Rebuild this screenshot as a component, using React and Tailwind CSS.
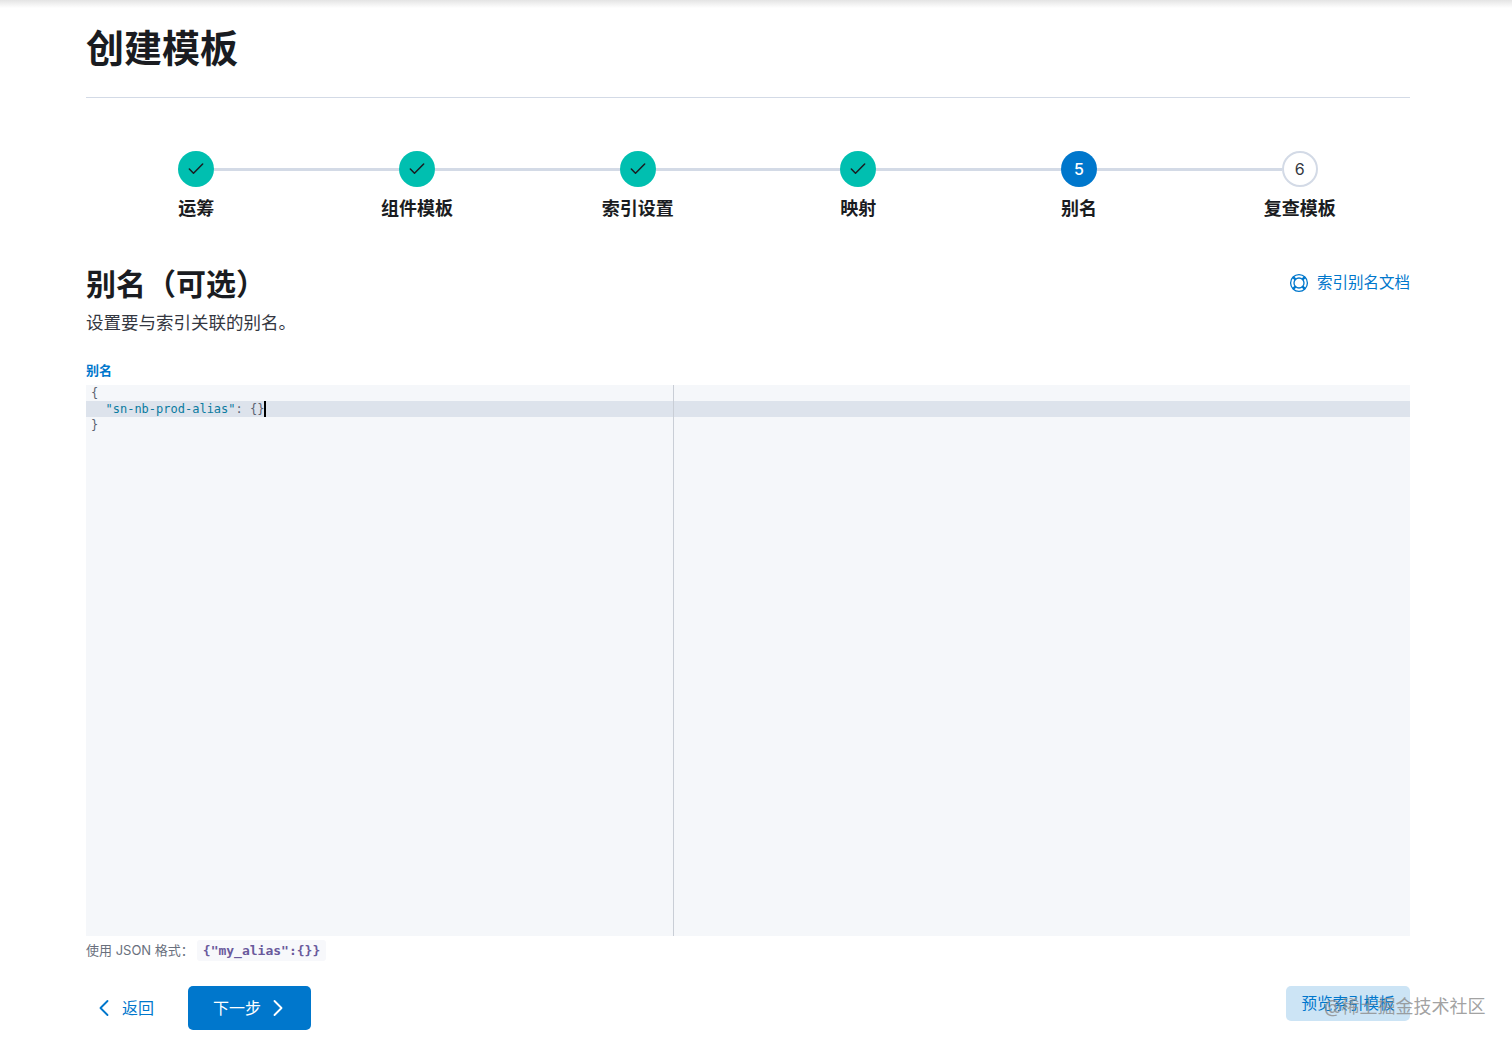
import React from 'react';
import { Check, ChevronLeft, ChevronRight } from 'lucide-react';

const cjk = "font-['Inter','Noto_Sans_CJK_SC',sans-serif]";

const steps = [
  { label: '运筹', status: 'done' },
  { label: '组件模板', status: 'done' },
  { label: '索引设置', status: 'done' },
  { label: '映射', status: 'done' },
  { label: '别名', status: 'current', num: 5 },
  { label: '复查模板', status: 'todo', num: 6 },
];

const HelpIcon = () => (
  <svg width="20" height="20" viewBox="0 0 20 20" fill="none" stroke="currentColor" strokeWidth="1.3">
    <circle cx="10" cy="10" r="8.4" />
    <circle cx="10" cy="10" r="5" />
    <path d="M4.2 4.2 6.4 6.4M15.8 4.2 13.6 6.4M4.2 15.8 6.4 13.6M15.8 15.8 13.6 13.6" strokeWidth="2.4" />
  </svg>
);

const Step = ({ step, first, last }) => {
  return (
    <div className="flex flex-col items-center">
      <div className="flex w-full items-center">
        <div className={`h-[3px] flex-1 ${first ? '' : 'bg-[#d3dae6]'}`} />
        {step.status === 'done' && (
          <div className="flex h-9 w-9 items-center justify-center rounded-full bg-[#00bfb0] text-[#1a1c21]">
            <Check size={20} strokeWidth={1.8} />
          </div>
        )}
        {step.status === 'current' && (
          <div className="flex h-9 w-9 items-center justify-center rounded-full bg-[#0077cc] pb-px text-[16px] font-medium text-white">
            {step.num}
          </div>
        )}
        {step.status === 'todo' && (
          <div className="flex h-9 w-9 items-center justify-center rounded-full border-2 border-[#d3dae6] bg-white pb-px text-[16px] text-[#343741]">
            {step.num}
          </div>
        )}
        <div className={`h-[3px] flex-1 ${last ? '' : 'bg-[#d3dae6]'}`} />
      </div>
      <div className="mt-[10px] text-[18px] leading-[24px] font-bold text-[#1a1c21]">{step.label}</div>
    </div>
  );
};

const App = () => {
  return (
    <div className={`relative h-[1044px] overflow-hidden bg-white ${cjk}`}>
      {/* 顶部阴影 */}
      <div className="h-2 bg-gradient-to-b from-[#e4e4e4] to-white" />

      <div className="pr-[102px] pl-[86px]">
        {/* 标题 */}
        <h1 className="mt-[14px] text-[38px] leading-[52px] font-bold text-[#1a1c21]">创建模板</h1>
        <div className="mt-[23px] h-px bg-[#d3dae6]" />

        {/* 步骤条 */}
        <div className="mt-[53px] grid grid-cols-6">
          {steps.map((step, i) => (
            <Step key={step.label} step={step} first={i === 0} last={i === steps.length - 1} />
          ))}
        </div>

        {/* 别名标题 */}
        <div className="mt-[42px] flex items-center justify-between">
          <h2 className="pt-[2px] text-[30px] leading-[38px] font-bold text-[#1a1c21]">别名（可选）</h2>
          <a className="flex items-center gap-2 text-[15.5px] leading-6 text-[#0077cc]">
            <HelpIcon />
            索引别名文档
          </a>
        </div>
        <p className="mt-[8px] text-[17.5px] leading-6 text-[#343741]">设置要与索引关联的别名。</p>

        {/* 编辑器 */}
        <div className="mt-[26px] text-[13px] leading-[18px] font-bold text-[#0077cc]">别名</div>
        <div className="mt-[6px] grid h-[551px] grid-cols-[588px_1fr] bg-[#f5f7fa] font-['DejaVu_Sans_Mono',monospace] text-[12px] leading-4 text-[#5a6270]">
          <div className="border-r border-[#c9ced6]">
            <div className="h-4 pl-[5px]">{'{'}</div>
            <div className="flex h-4 items-center bg-[#dde3ec] pl-[19.5px]">
              <span className="text-[#0b7ba0]">"sn-nb-prod-alias"</span>
              <span>: {'{}'}</span>
              <span className="h-4 w-[2px] bg-black" />
            </div>
            <div className="h-4 pl-[5px]">{'}'}</div>
          </div>
          <div>
            <div className="h-4" />
            <div className="h-4 bg-[#dde3ec]" />
          </div>
        </div>

        {/* 提示 */}
        <div className="mt-[4px] flex items-center gap-[3px]">
          <span className="text-[13px] text-[#69707d]">使用 JSON 格式：</span>
          <code className="rounded-[3px] bg-[#f7f8fb] px-[6px] font-['DejaVu_Sans_Mono',monospace] text-[13px] leading-[21px] font-bold text-[#6a5a9c]">
            {'{"my_alias":{}}'}
          </code>
        </div>

        {/* 底部按钮 */}
        <div className="mt-[25px] flex items-start justify-between">
          <div className="flex items-center gap-[34px]">
            <button className="flex items-center gap-[4px] pl-[4px] text-[16px] text-[#0077cc]">
              <ChevronLeft size={28} strokeWidth={1.6} />
              返回
            </button>
            <button className="flex h-11 w-[123px] items-center gap-[3px] rounded-[5px] bg-[#0077cc] pl-[25px] text-[16px] text-white">
              下一步
              <ChevronRight size={28} strokeWidth={1.6} />
            </button>
          </div>
          <button className="h-[35px] w-[124px] rounded-[5px] bg-[#cce4f5] text-[15.5px] text-[#0077cc]">预览索引模板</button>
        </div>
      </div>

      {/* 水印 */}
      <div className="absolute top-[995px] left-[1324px] text-[18px] leading-6 text-[#8a8a8a]/80">@稀土掘金技术社区</div>
    </div>
  );
};

export default App;
